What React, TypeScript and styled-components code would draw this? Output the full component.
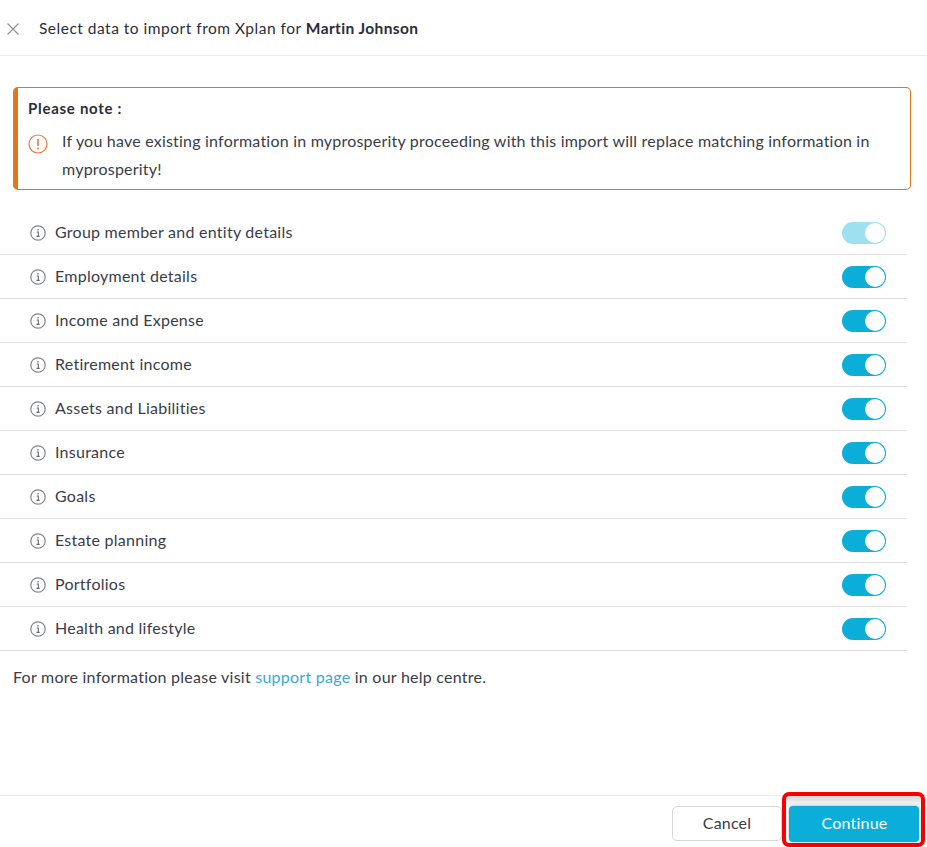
import React from "react";
import styled, { createGlobalStyle } from "styled-components";

const Global = createGlobalStyle`
  html, body { margin: 0; padding: 0; background: #fff; }
  body { font-family: Lato, "Noto Sans", sans-serif; color: #2b2d3a; overflow: hidden; }
`;
const Page = styled.div`
  width: 927px; height: 847px; display: flex; flex-direction: column; box-sizing: border-box;
`;
const Header = styled.header`
  height: 56px; box-sizing: border-box; border-bottom: 1px solid #ececec;
  display: flex; align-items: center; padding: 0 0 0 4px; gap: 17px; flex: none;
`;
const CloseButton = styled.button`
  width: 18px; height: 18px; padding: 3px; border: 0; background: none; display: flex; color: #8a8f96;
  margin-top: 2px;
`;
const Title = styled.h1`
  margin: 0; font-size: 15.5px; font-weight: 400; letter-spacing: .5px; color: #2b2d3a;
  b { font-weight: 700; letter-spacing: .4px; }
`;
const Body = styled.main`
  flex: 1; padding: 31px 20px 0 0;
`;
const Alert = styled.section`
  margin: 0 -4px 0 13px; height: 103px; box-sizing: border-box;
  border: 1px solid #e2761b; border-left: 5px solid #e2761b; border-radius: 5px;
  padding: 10px 10px 0 10px;
`;
const AlertTitle = styled.div`
  font-size: 15px; font-weight: 700; line-height: 20px; letter-spacing: .72px; margin-bottom: 9px;
`;
const AlertBody = styled.div`
  display: flex; gap: 14px; align-items: flex-start;
`;
const AlertIcon = styled.svg`
  width: 20px; height: 20px; margin-top: 7px; flex: none;
`;
const AlertText = styled.p`
  margin: 0; font-size: 16px; line-height: 28px; letter-spacing: .21px; color: #3a3c49;
`;
const List = styled.div`
  margin-top: 21px;
`;
const Row = styled.div`
  height: 44px; box-sizing: border-box; border-bottom: 1px solid #e0e0e0;
  display: flex; align-items: center; padding: 0 21px 0 30px;
`;
const InfoIcon = styled.svg`
  width: 16px; height: 16px; flex: none; margin-right: 9px;
`;
const Label = styled.span`
  flex: 1; font-size: 16px; line-height: 20px; margin-bottom: 2px; letter-spacing: .25px; color: #3a3c49;
`;
const Toggle = styled.span<{ $dim?: boolean }>`
  width: 44px; height: 22px; border-radius: 11px; display: flex; justify-content: flex-end;
  align-items: center; padding-right: 1px; box-sizing: border-box;
  background: ${(p) => (p.$dim ? "#9fe0f0" : "#0aaed8")};
`;
const Knob = styled.span`
  width: 20px; height: 20px; border-radius: 50%; background: #fff;
`;
const Note = styled.p`
  margin: 15px 0 0 13px; font-size: 16px; line-height: 22px; letter-spacing: .25px; color: #3a3c49;
`;
const SupportLink = styled.a`
  color: #38a9d6; text-decoration: none;
`;
const Footer = styled.footer`
  height: 52px; flex: none; border-top: 1px solid #ececec; box-sizing: border-box;
  display: flex; justify-content: flex-end; align-items: flex-start; padding: 0 2px 0 0;
`;
const Cancel = styled.button`
  width: 110px; height: 35px; margin-top: 10px; padding: 0 0 2px; border: 1px solid #d8d8d8; border-radius: 5px; background: #fff;
  font: 400 16px Lato, sans-serif; color: #3a3c49; letter-spacing: .2px;
`;
const Highlight = styled.div`
  width: 143px; height: 55px; margin-top: -4px; box-sizing: border-box;
  border: 4px solid #f60000; border-radius: 7px; padding: 10px 3px 0 3px;
  background: linear-gradient(#d8d8d8, #fff 12px);
`;
const Continue = styled.button`
  width: 130px; height: 36px; border: 0; padding: 0 0 4px 1px; border-radius: 4px; background: #0aaed8;
  font: 400 16px Lato, sans-serif; color: #fff; letter-spacing: .2px;
  box-shadow: 0 0 3px rgba(0,0,0,.35);
`;

const items = [
  "Group member and entity details", "Employment details", "Income and Expense", "Retirement income",
  "Assets and Liabilities", "Insurance", "Goals", "Estate planning", "Portfolios", "Health and lifestyle",
];

const Info = () => (
  <InfoIcon viewBox="0 0 16 16" fill="none">
    <circle cx="8" cy="8" r="7.2" stroke="#7d8792" strokeWidth="1.2" />
    <path d="M6.8 7h1.5v4.2M6.5 11.4h3.2" stroke="#5f6872" strokeWidth="1.1" />
    <circle cx="8" cy="4.8" r=".8" fill="#5f6872" />
  </InfoIcon>
);

export default function App() {
  return (
    <Page>
      <Global />
      <Header>
        <CloseButton aria-label="Close">
          <svg viewBox="0 0 12 12" width="12" height="12" fill="none" stroke="currentColor" strokeWidth="1.1">
            <path d="M.5.5l11 11M11.5.5l-11 11" />
          </svg>
        </CloseButton>
        <Title>Select data to import from Xplan for <b>Martin Johnson</b></Title>
      </Header>
      <Body>
        <Alert>
          <AlertTitle>Please note :</AlertTitle>
          <AlertBody>
            <AlertIcon viewBox="0 0 20 20" fill="none">
              <circle cx="10" cy="10" r="9" stroke="#e8743b" strokeWidth="1.2" />
              <path d="M10 5v7" stroke="#e8743b" strokeWidth="1.5" />
              <circle cx="10" cy="14.6" r="1" fill="#e8743b" />
            </AlertIcon>
            <AlertText>
              If you have existing information in myprosperity proceeding with this import will replace matching information in myprosperity!
            </AlertText>
          </AlertBody>
        </Alert>
        <List>
          {items.map((t, i) => (
            <Row key={t}>
              <Info />
              <Label>{t}</Label>
              <Toggle $dim={i === 0}><Knob /></Toggle>
            </Row>
          ))}
        </List>
        <Note>For more information please visit <SupportLink href="#">support page</SupportLink> in our help centre.</Note>
      </Body>
      <Footer>
        <Cancel>Cancel</Cancel>
        <Highlight><Continue>Continue</Continue></Highlight>
      </Footer>
    </Page>
  );
}
